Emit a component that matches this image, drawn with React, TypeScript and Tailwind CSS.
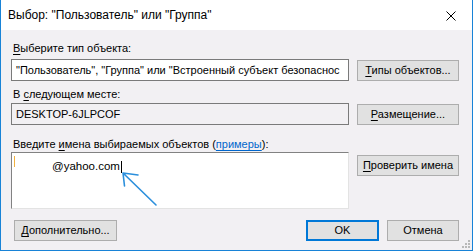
import React from 'react';

const U: React.FC<{ children: React.ReactNode }> = ({ children }) => (
    <span className="underline underline-offset-[2px] decoration-1">{children}</span>
);

const Btn: React.FC<{ children: React.ReactNode; primary?: boolean; className?: string }> = ({ children, primary, className = '' }) => (
    <div
        className={`h-[21px] shrink-0 flex items-center justify-center bg-[#e1e1e1] text-black whitespace-nowrap ${primary ? 'border-2 border-[#0078d7]' : 'border border-[#adadad]'} ${className}`}
    >
        {children}
    </div>
);

const App: React.FC = () => {
    return (
        <div
            className="w-[473px] h-[251px] flex flex-col bg-white border-x border-b border-[#1883d7] text-[11px] leading-[15px] text-black overflow-hidden"
            style={{ fontFamily: '"Liberation Sans", Arial, sans-serif' }}
        >
            {/* title bar */}
            <div className="h-[30px] shrink-0 flex items-center justify-between pl-[7px] pr-[16px] bg-white text-[12px]">
                <span className="pt-[1px]">Выбор: "Пользователь" или "Группа"</span>
                <svg width="10" height="10" viewBox="0 0 10 10" className="mt-[1px]">
                    <path d="M0.5 0.5 L9.5 9.5 M9.5 0.5 L0.5 9.5" stroke="#000" strokeWidth="1" />
                </svg>
            </div>

            {/* body */}
            <div className="flex-1 flex flex-col bg-[#f2f0f3] pl-[10px] pr-[13px] pt-[11px] relative">
                <div className="pl-[2px]">
                    <U>В</U>ыберите тип объекта:
                </div>
                <div className="flex items-center gap-[8px] mt-[3px]">
                    <div className="w-[338px] h-[22px] bg-white border border-[#7a7a7a] flex items-center pl-[4px] whitespace-nowrap overflow-hidden">
                        "Пользователь", "Группа" или "Встроенный субъект безопаснос
                    </div>
                    <Btn className="w-[102px]">
                        <span><U>Т</U>ипы объектов...</span>
                    </Btn>
                </div>

                <div className="pl-[2px] mt-[6px]">
                    В <U>с</U>ледующем месте:
                </div>
                <div className="flex items-center gap-[8px] mt-[1px]">
                    <div className="w-[338px] h-[22px] border border-[#7a7a7a] flex items-center pl-[4px]">
                        DESKTOP-6JLPCOF
                    </div>
                    <Btn className="w-[102px]">
                        <span><U>Р</U>азмещение...</span>
                    </Btn>
                </div>

                <div className="pl-[2px] mt-[12px]">
                    Введите <U>и</U>мена выбираемых объектов (
                    <span className="text-[#0066cc] underline underline-offset-[2px]">примеры</span>):
                </div>
                <div className="flex items-start gap-[8px]">
                    <div className="w-[338px] h-[57px] bg-white border-t border-l border-[#828282] border-r border-b border-r-[#e3e3e3] border-b-[#e3e3e3] relative">
                        <div className="absolute left-[2px] top-[3px] w-[1px] h-[11px] bg-[#f0b040]" />
                        <div className="absolute left-[40px] top-[6px] flex items-center text-[11.5px]">
                            <span>@yahoo.com</span>
                            <span className="w-[1px] h-[12px] bg-black ml-[1px]" />
                        </div>
                    </div>
                    <Btn className="w-[102px] mt-[3px]">
                        <span><U>П</U>роверить имена</span>
                    </Btn>
                </div>

                <div className="flex items-center mt-[11px] pl-[3px]">
                    <Btn className="w-[103px]">
                        <span><U>Д</U>ополнительно...</span>
                    </Btn>
                    <div className="flex-1" />
                    <Btn primary className="w-[73px]">OK</Btn>
                    <Btn className="w-[72px] ml-[8px]">Отмена</Btn>
                </div>

                {/* annotation arrow */}
                <svg className="absolute left-[110px] top-[135px]" width="50" height="45" viewBox="0 0 50 45">
                    <path d="M45 40 L12 8 M12 8 L13.5 21 M12 8 L27 10" stroke="#2b8fdc" strokeWidth="1.6" fill="none" strokeLinecap="round" />
                </svg>

                {/* resize grip */}
                <svg className="absolute right-[2px] bottom-[2px]" width="8" height="8" viewBox="0 0 8 8">
                    <rect x="6" y="0" width="2" height="2" fill="#b8b8b8" />
                    <rect x="3" y="3" width="2" height="2" fill="#b8b8b8" />
                    <rect x="6" y="3" width="2" height="2" fill="#b8b8b8" />
                    <rect x="0" y="6" width="2" height="2" fill="#b8b8b8" />
                    <rect x="3" y="6" width="2" height="2" fill="#b8b8b8" />
                    <rect x="6" y="6" width="2" height="2" fill="#b8b8b8" />
                </svg>
            </div>
        </div>
    );
};

export default App;
